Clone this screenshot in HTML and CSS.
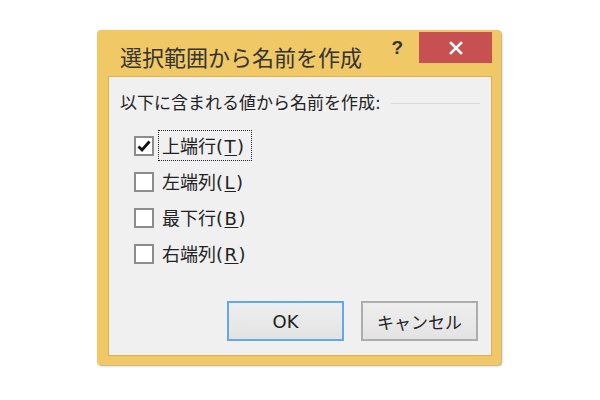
FILE: index.html
```html
<!DOCTYPE html>
<html lang="ja">
<head>
<meta charset="utf-8">
<title>選択範囲から名前を作成</title>
<link rel="stylesheet" href="styles.css">
</head>
<body>
<div class="dialog">
  <div class="titlebar">
    <div class="title">選択範囲から名前を作成</div>
    <div class="help">?</div>
    <div class="close">
      <svg width="14" height="14" viewBox="0 0 14 14"><path d="M2 2 L12 12 M12 2 L2 12" stroke="#fff" stroke-width="2.6" stroke-linecap="square" fill="none"/></svg>
    </div>
  </div>
  <div class="panel">
    <div class="group">
      <span class="group-label">以下に含まれる値から名前を作成:</span>
      <span class="group-line"></span>
    </div>
    <div class="options">
      <div class="opt">
        <span class="box">
          <svg width="16" height="16" viewBox="0 0 16 16"><path d="M2.5 8.5 L6 12 L13.5 3.5" stroke="#111" stroke-width="2.8" fill="none" stroke-linejoin="miter"/></svg>
        </span>
        <span class="text focus">上端行<span class="key">(<u>T</u>)</span></span>
      </div>
      <div class="opt">
        <span class="box"></span>
        <span class="text">左端列<span class="key">(<u>L</u>)</span></span>
      </div>
      <div class="opt">
        <span class="box"></span>
        <span class="text">最下行<span class="key">(<u>B</u>)</span></span>
      </div>
      <div class="opt">
        <span class="box"></span>
        <span class="text">右端列<span class="key">(<u>R</u>)</span></span>
      </div>
    </div>
    <div class="buttons">
      <div class="btn default">OK</div>
      <div class="btn">キャンセル</div>
    </div>
  </div>
</div>
</body>
</html>
```
FILE: styles.css
```css
html, body {
  margin: 0;
  padding: 0;
  background: #ffffff;
}
body {
  width: 600px;
  height: 400px;
  overflow: hidden;
  font-family: "DejaVu Sans", "Noto Sans CJK JP", sans-serif;
  color: #1e1e1e;
}
.dialog {
  margin: 30px 0 0 97px;
  width: 404px;
  height: 335px;
  box-sizing: border-box;
  background: #f0c866;
  border-radius: 4px;
  box-shadow: 1px 1px 2px rgba(120, 90, 20, 0.55);
  padding: 0 10px 10px 12px;
  display: flex;
  flex-direction: column;
}
.titlebar {
  height: 47px;
  display: flex;
  align-items: flex-start;
  flex: none;
}
.title {
  margin: 12px 0 0 11px;
  font-family: "Noto Sans CJK JP", sans-serif;
  font-size: 22px;
  line-height: 28px;
  color: #333;
  flex: 1;
}
.help {
  margin: 7px 16px 0 0;
  font-family: "Liberation Sans", sans-serif;
  font-weight: bold;
  font-size: 19px;
  line-height: 22px;
  color: #333;
}
.close {
  margin-top: 2px;
  margin-right: -1px;
  width: 73px;
  height: 31px;
  background: #c75050;
  display: flex;
  align-items: center;
  justify-content: center;
}
.close svg {
  display: block;
}
.panel {
  flex: 1;
  background: #f0f0f0;
  box-shadow: 0 0 0 1px rgba(190, 150, 60, 0.45);
  display: flex;
  flex-direction: column;
  padding: 14px 11px 14px 11px;
}
.group {
  display: flex;
  align-items: center;
  height: 24px;
}
.group-label {
  font-size: 17px;
  line-height: 24px;
  color: #222;
}
.group-line {
  flex: 1;
  height: 1px;
  background: #dadada;
  margin-left: 10px;
}
.options {
  display: flex;
  flex-direction: column;
  margin: 15px 0 0 14px;
  gap: 5px;
}
.opt {
  display: flex;
  align-items: center;
  height: 31px;
}
.box {
  width: 20px;
  height: 20px;
  box-sizing: border-box;
  border: 2px solid #8c8c8c;
  background: #fff;
  display: flex;
  align-items: center;
  justify-content: center;
  flex: none;
}
.box svg {
  display: block;
}
.text {
  margin-left: 4px;
  padding: 0 5px 0 3px;
  height: 31px;
  box-sizing: border-box;
  border: 1px solid transparent;
  font-family: "Noto Sans CJK JP", sans-serif;
  font-size: 18px;
  line-height: 29px;
  color: #222;
}
.key {
  font-family: "DejaVu Sans", sans-serif;
  font-size: 18px;
  letter-spacing: 1.5px;
}
.text.focus {
  border: 1px dotted #222;
}
.text u {
  text-underline-offset: 2px;
}
.buttons {
  margin-top: auto;
  display: flex;
  justify-content: flex-end;
  gap: 17px;
  padding-right: 2px;
}
.btn {
  width: 117px;
  height: 40px;
  box-sizing: border-box;
  border: 2px solid #adadad;
  background: linear-gradient(#eeeeee, #e3e3e3);
  display: flex;
  align-items: center;
  justify-content: center;
  font-family: "Noto Sans CJK JP", sans-serif;
  font-size: 17px;
  color: #222;
}
.btn.default {
  border-color: #62a8ea;
  font-family: "DejaVu Sans", sans-serif;
  font-size: 18px;
}
```
